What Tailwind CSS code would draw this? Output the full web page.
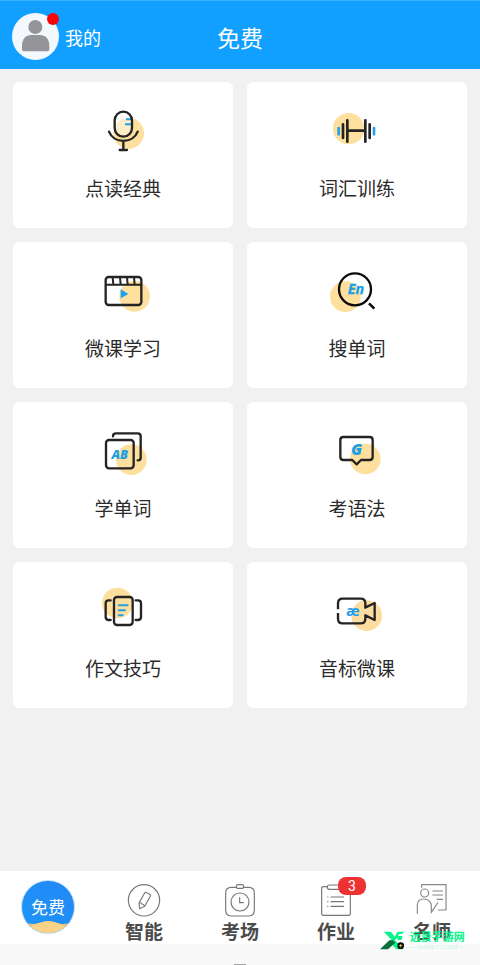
<!DOCTYPE html>
<html lang="zh-CN">
<head>
<meta charset="utf-8">
<meta name="viewport" content="width=device-width, initial-scale=1">
<title>免费</title>
<script src="https://cdn.jsdelivr.net/npm/@tailwindcss/browser@4"></script>
</head>
<body class="flex min-h-screen flex-col bg-[#f1f1f1] font-['Noto_Sans_CJK_SC',sans-serif] text-[#2b2b2b]">
<header class="relative flex h-[69px] items-center justify-center border-t border-[#3cb0fb] bg-[#11a0ff] pt-1 text-white">
  <a href="#me" class="absolute left-3 top-3 flex items-center gap-1.5">
    <span class="relative block size-[47px] rounded-full bg-[#f3f8fc]">
      <svg class="size-full" viewBox="0 0 141 141" fill="#949499" aria-hidden="true">
        <circle cx="70" cy="42" r="21"/>
        <path d="M30 107V98C30 78 42 66 58 66H84C100 66 112 78 112 98V107Q112 115 104 115H38Q30 115 30 107Z"/>
      </svg>
      <span class="absolute right-0 top-0 size-3 rounded-full bg-[#f80606]"></span>
    </span>
    <span class="text-lg leading-6">我的</span>
  </a>
  <h1 class="text-[23px] leading-8">免费</h1>
</header>

<main class="flex-1 px-[13px] pt-[13px] pb-4">
  <div class="grid grid-cols-2 gap-[14px]">
    <a href="#read" class="flex h-[146px] flex-col items-center gap-[13px] rounded-md bg-white pt-[19px]">
      <svg class="size-[60px]" viewBox="69 18 180 180" fill="none" stroke="#252323" stroke-width="7" stroke-linecap="round" stroke-linejoin="round" aria-hidden="true">
        <circle cx="176" cy="115" r="46" fill="#fddf9e" stroke="none"/>
        <rect x="134" y="50" width="52" height="76" rx="26" fill="#fff" stroke="none"/>
        <path d="M186 68V100C186 114 174 126 160 126C146 126 137 116 135 106C136 78 155 67 186 68Z" fill="#fdedc9" stroke="none"/>
        <path d="M168 73H185M165 88H185" stroke="#1ca0e8" stroke-width="6" stroke-linecap="butt"/>
        <rect x="134" y="50" width="52" height="75" rx="26"/>
        <path d="M117 110C131 147 189 147 203 110M160 138V164M149 165H171"/>
      </svg>
      <span class="text-[19px] leading-7">点读经典</span>
    </a>
    <a href="#vocab" class="flex h-[146px] flex-col items-center gap-[13px] rounded-md bg-white pt-[19px]">
      <svg class="size-[60px]" viewBox="81 18 180 180" fill="none" stroke="#252323" stroke-width="8" stroke-linecap="round" aria-hidden="true">
        <circle cx="146" cy="101" r="47" fill="#fddf9e" stroke="none"/>
        <path d="M142 76V140M196 76V140M142 107H196M129 88V129M209 88V129"/>
        <path d="M116 99V118M222 99V118" stroke="#259fe5"/>
      </svg>
      <span class="text-[19px] leading-7">词汇训练</span>
    </a>
    <a href="#lessons" class="flex h-[146px] flex-col items-center gap-[13px] rounded-md bg-white pt-[19px]">
      <svg class="size-[60px]" viewBox="69 18 180 180" fill="none" stroke="#252323" stroke-width="7" stroke-linejoin="round" aria-hidden="true">
        <circle cx="194" cy="124" r="46" fill="#fddf9e" stroke="none"/>
        <rect x="107" y="66" width="107" height="84" rx="9"/>
        <path d="M107 89H214M128 67L130 88M150 67L152 88M171 67L173 88M192 67L194 88" stroke-width="6"/>
        <path d="M152 103V130L175 117Z" fill="#1c9ff0" stroke="none"/>
      </svg>
      <span class="text-[19px] leading-7">微课学习</span>
    </a>
    <a href="#search" class="flex h-[146px] flex-col items-center gap-[13px] rounded-md bg-white pt-[19px]">
      <svg class="size-[60px]" viewBox="81 18 180 180" fill="none" stroke="#0d0b0a" stroke-width="7" aria-hidden="true">
        <circle cx="136" cy="125" r="46" fill="#fddf9e" stroke="none"/>
        <circle cx="165" cy="103" r="48"/>
        <path d="M207 145L223 161" stroke-width="8"/>
        <text x="168" y="118" text-anchor="middle" font-family="Open Sans, sans-serif" font-size="43" font-weight="700" font-style="italic" fill="#1c9fe6" stroke="#1c9fe6" stroke-width="1">En</text>
      </svg>
      <span class="text-[19px] leading-7">搜单词</span>
    </a>
    <a href="#words" class="flex h-[146px] flex-col items-center gap-[13px] rounded-md bg-white pt-[19px]">
      <svg class="size-[60px]" viewBox="69 18 180 180" fill="none" stroke="#252323" stroke-width="7" stroke-linecap="round" aria-hidden="true">
        <circle cx="184" cy="134" r="46" fill="#fddf9e" stroke="none"/>
        <rect x="108" y="75" width="83" height="85" rx="9"/>
        <path d="M129 64Q129 55 138 55H203Q212 55 212 64V128Q212 136 203 136"/>
        <text x="149" y="132" text-anchor="middle" font-family="Open Sans, sans-serif" font-size="38" font-weight="800" font-style="italic" fill="#1c9fe6" stroke="none">AB</text>
      </svg>
      <span class="text-[19px] leading-7">学单词</span>
    </a>
    <a href="#grammar" class="flex h-[146px] flex-col items-center gap-[13px] rounded-md bg-white pt-[19px]">
      <svg class="size-[60px]" viewBox="81 18 180 180" fill="none" stroke="#252323" stroke-width="7" stroke-linejoin="round" aria-hidden="true">
        <circle cx="196" cy="132" r="46" fill="#fddf9e" stroke="none"/>
        <path d="M130 66H209Q218 66 218 75V126Q218 135 209 135H183L170 148L157 135H130Q121 135 121 126V75Q121 66 130 66Z"/>
        <text x="170" y="119" text-anchor="middle" font-family="Open Sans, sans-serif" font-size="48" font-weight="800" font-style="italic" fill="#1c9fe6" stroke="none">G</text>
      </svg>
      <span class="text-[19px] leading-7">考语法</span>
    </a>
    <a href="#writing" class="flex h-[146px] flex-col items-center gap-[13px] rounded-md bg-white pt-[19px]">
      <svg class="size-[60px]" viewBox="69 18 180 180" fill="none" stroke="#252323" stroke-width="7" stroke-linecap="round" aria-hidden="true">
        <circle cx="142" cy="84" r="46" fill="#fddf9e" stroke="none"/>
        <rect x="132" y="66" width="56" height="84" rx="9"/>
        <path d="M122 76H116Q107 76 107 85V126Q107 135 116 135H122M197 76H204Q213 76 213 85V126Q213 135 204 135H197"/>
        <path d="M146 91H173M146 106H165M146 121H158" stroke="#259fe5" stroke-width="6"/>
      </svg>
      <span class="text-[19px] leading-7">作文技巧</span>
    </a>
    <a href="#phonetics" class="flex h-[146px] flex-col items-center gap-[13px] rounded-md bg-white pt-[19px]">
      <svg class="size-[60px]" viewBox="81 18 180 180" fill="none" stroke="#252323" stroke-width="7" stroke-linejoin="round" aria-hidden="true">
        <circle cx="200" cy="122" r="46" fill="#fddca0" stroke="none"/>
        <path d="M114 103V85Q114 71 128 71H182Q196 71 196 85V98L224 84V135L196 121V131Q196 145 182 145H128Q114 145 114 131V114"/>
        <text x="159" y="122" text-anchor="middle" font-family="Open Sans, sans-serif" font-size="45" font-weight="700" fill="#1c9ff0" stroke="none">æ</text>
      </svg>
      <span class="text-[19px] leading-7">音标微课</span>
    </a>
  </div>
</main>

<footer class="relative">
  <nav class="grid h-[73px] grid-cols-5 bg-white text-[19px] font-bold leading-6 text-[#4b4b4b]">
    <a href="#free" class="flex items-start justify-center pt-[9px]">
      <span class="relative flex size-[54px] items-center justify-center overflow-hidden rounded-full border border-[#b9def8] bg-linear-to-tr from-[#1b95f8] to-[#2388f5] text-[17px] font-normal text-white">
        <svg class="absolute inset-0 size-full" viewBox="0 0 54 54" aria-hidden="true">
          <path d="M0 44C8 44 15 46 20 43Q27 40 35 43C40 46 46 44 54 44V54H0Z" fill="#f0c573"/>
          <path d="M8 49Q15 42 27 42Q39 42 46 49L40 54H14Z" fill="#fad388"/>
        </svg>
        <span class="relative">免费</span>
      </span>
    </a>
    <a href="#smart" class="flex flex-col items-center gap-px pt-[11px]">
      <svg class="size-9" viewBox="378 66 108 108" fill="none" stroke="#777" stroke-width="3.5" stroke-linejoin="round" aria-hidden="true">
        <circle cx="432" cy="121" r="47"/>
        <path d="M417 129L434 99Q436 96 440 98L449 103Q453 105 451 109L434 139L419 146ZM417 129Q422 126 425 132Q431 131 434 139"/>
      </svg>
      <span>智能</span>
    </a>
    <a href="#exam" class="flex flex-col items-center gap-px pt-[11px]">
      <svg class="size-9" viewBox="666 66 108 108" fill="none" stroke="#777" stroke-width="3.5" stroke-linecap="round" aria-hidden="true">
        <path d="M707 82H694Q677 82 677 99V151Q677 168 694 168H746Q763 168 763 151V99Q763 82 746 82H733"/>
        <rect x="709" y="74" width="22" height="11" rx="5"/>
        <circle cx="720" cy="126" r="27"/>
        <path d="M719 113V128H730"/>
      </svg>
      <span>考场</span>
    </a>
    <a href="#homework" class="flex flex-col items-center gap-px pt-[11px]">
      <span class="relative">
        <svg class="size-9" viewBox="234 66 108 108" fill="none" stroke="#777" stroke-width="3.5" stroke-linecap="round" aria-hidden="true">
          <path d="M262 80H251Q245 80 245 86V160Q245 166 251 166H325Q331 166 331 160V86Q331 80 325 80H312"/>
          <rect x="262" y="75" width="50" height="13" rx="6"/>
          <path d="M273 111H311M273 125H311M273 139H311M263 111H264M263 125H264M263 139H264"/>
        </svg>
        <span class="absolute -top-[5px] left-5 flex h-[18px] w-7 items-center justify-center rounded-lg bg-[#ee3234] font-['Roboto',sans-serif] text-sm font-normal text-white">3</span>
      </span>
      <span>作业</span>
    </a>
    <a href="#teachers" class="flex flex-col items-center gap-px pt-[11px]">
      <svg class="size-9" viewBox="522 66 108 108" fill="none" stroke="#888" stroke-width="3.5" aria-hidden="true">
        <path d="M545 83V74H618V150H594M577 93H609M577 105H609M590 118H609"/>
        <circle cx="554" cy="99" r="12"/>
        <path d="M532 161V136Q532 117 551 117Q571 117 574 137V157L594 127"/>
      </svg>
      <span>名师</span>
    </a>
  </nav>
  <div class="flex h-[21px] items-end justify-center overflow-hidden bg-[#f9f9f9]">
    <span class="h-px w-3 bg-[#a5a5a5]"></span>
  </div>
  <div class="absolute right-[15px] top-[59px] flex items-start gap-1">
    <svg class="mt-px h-[19px] w-[25px]" viewBox="423 212 75 57" aria-hidden="true">
      <path d="M434 214H456L467 229L476 214H496L489 221H480L477 227H491L487 234H473L468 240L494 267H472L451 245L458 238Z" fill="#06f58b"/>
      <path d="M423 267L451 240H462L469 247L447 267Z" fill="#08713c"/>
      <path d="M478 230H491L487 239H475Z" fill="#06f58b"/>
      <circle cx="485" cy="256" r="10" fill="#080d09"/>
      <path d="M480 256H490M485 251V261" stroke="#d7b84c" stroke-width="3"/>
    </svg>
    <div class="flex flex-col items-center">
      <span class="text-[11px] font-bold leading-3 text-[#04f58b]">远景手游网</span>
      <span class="font-['Liberation_Sans',sans-serif] text-[6px] italic leading-[10px] text-[#c4f8df]">— GAMEYJ.COM —</span>
    </div>
  </div>
</footer>
</body>
</html>
